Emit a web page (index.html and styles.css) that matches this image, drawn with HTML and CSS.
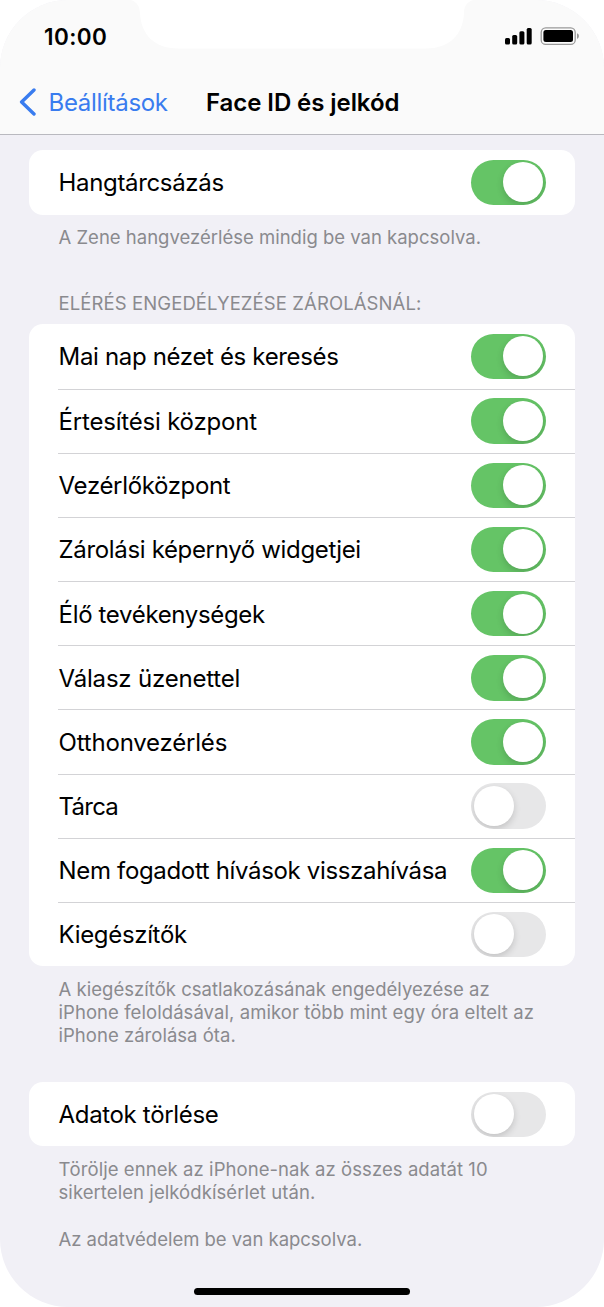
FILE: index.html
```html
<!DOCTYPE html>
<html lang="hu">
<head>
<meta charset="utf-8">
<title>Face ID és jelkód</title>
<link rel="stylesheet" href="styles.css">
</head>
<body>
<main class="phone">
  <header class="top">
    <svg class="notch" width="328" height="49" viewBox="0 0 328 49" aria-hidden="true"><path d="M-7 0C-1 2 1.500 6 2 13C3 34 16 48.500 40 48.500H288C311 48.500 325 35 326 13C326 6 329 2 335 0Z"/></svg>
    <div class="status">
      <span class="time">10:00</span>
      <svg class="status-icons" width="76" height="20" viewBox="0 0 76 20" aria-hidden="true">
        <rect x="1" y="11" width="5" height="6.500" rx="1.500"/>
        <rect x="8.200" y="8" width="5" height="9.500" rx="1.500"/>
        <rect x="15.400" y="4.200" width="5" height="13.300" rx="1.500"/>
        <rect x="22.700" y="1" width="5" height="16.500" rx="1.500"/>
        <rect class="battery-case" x="37.200" y="0.800" width="34" height="16.600" rx="4.500"/>
        <rect x="39.400" y="3.100" width="29.600" height="12" rx="2.500"/>
        <path class="battery-tip" d="M73 6.300Q75 7 75 9T73 11.900Z"/>
      </svg>
    </div>
    <nav class="nav">
      <svg class="chevron" width="18" height="30" viewBox="0 0 18 30" aria-hidden="true"><path d="M16 3L3.600 15L16 27"/></svg>
      <a class="back">Beállítások</a>
      <h1 class="title">Face ID és jelkód</h1>
    </nav>
  </header>

  <section class="card first">
    <div class="row"><span class="label">Hangtárcsázás</span><i class="toggle on"></i></div>
  </section>
  <p class="note">A Zene hangvezérlése mindig be van kapcsolva.</p>

  <h2 class="heading">ELÉRÉS ENGEDÉLYEZÉSE ZÁROLÁSNÁL:</h2>
  <section class="card">
    <div class="row"><span class="label">Mai nap nézet és keresés</span><i class="toggle on"></i></div>
    <div class="row"><span class="label wide">Értesítési központ</span><i class="toggle on"></i></div>
    <div class="row"><span class="label">Vezérlőközpont</span><i class="toggle on"></i></div>
    <div class="row"><span class="label">Zárolási képernyő widgetjei</span><i class="toggle on"></i></div>
    <div class="row"><span class="label">Élő tevékenységek</span><i class="toggle on"></i></div>
    <div class="row"><span class="label wide">Válasz üzenettel</span><i class="toggle on"></i></div>
    <div class="row"><span class="label wide">Otthonvezérlés</span><i class="toggle on"></i></div>
    <div class="row"><span class="label narrow">Tárca</span><i class="toggle"></i></div>
    <div class="row"><span class="label">Nem fogadott hívások visszahívása</span><i class="toggle on"></i></div>
    <div class="row"><span class="label">Kiegészítők</span><i class="toggle"></i></div>
  </section>
  <p class="note"><span class="slight">A kiegészítők csatlakozásának engedélyezése az</span><br><span class="loose">iPhone feloldásával, amikor több mint egy óra eltelt az</span><br><span class="slight">iPhone zárolása óta.</span></p>

  <section class="card last">
    <div class="row"><span class="label">Adatok törlése</span><i class="toggle"></i></div>
  </section>
  <p class="note"><span class="loose">Törölje ennek az iPhone-nak az összes adatát 10</span><br><span class="loose">sikertelen jelkódkísérlet után.</span></p>
  <p class="note extra">Az adatvédelem be van kapcsolva.</p>
  <div class="home"></div>
</main>
</body>
</html>
```
FILE: styles.css
```css
* { box-sizing: border-box; }
body { margin: 0; background: #fff; font-family: Inter, "Liberation Sans", sans-serif; color: #000; }
.phone { position: relative; display: flex; flex-direction: column; width: 604px; height: 1307px; overflow: hidden; background: #f1f0f6; border-radius: 68px; }
.top { position: relative; height: 135px; flex: none; background: #fafafa; border-bottom: 1px solid #b9b9bf; }
.notch { position: absolute; left: 138px; top: 0; fill: #fff; overflow: visible; }
.status { display: flex; justify-content: space-between; align-items: center; height: 72px; padding: 0 24px 0 44px; }
.time { font-size: 22.500px; font-weight: 600; letter-spacing: .4px; }
.status-icons { display: block; margin-top: 1px; }
.battery-case { fill: none; stroke: #999; stroke-width: 1.300; }
.battery-tip { fill: #999; }
.nav { display: flex; align-items: center; height: 60px; padding-left: 18px; }
.chevron { fill: none; stroke: #397cef; stroke-width: 3.400; stroke-linecap: round; stroke-linejoin: round; }
.back { margin-left: 12.500px; width: 157.500px; flex: none; font-size: 24px; letter-spacing: -0.300px; color: #397cef; white-space: nowrap; }
.title { margin: 0; font-size: 24px; font-weight: 600; letter-spacing: -0.070px; white-space: nowrap; }
.card { flex: none; margin: 0 29px 0 29.400px; padding-left: 28.600px; background: #fff; border-radius: 14px; }
.first { margin-top: 15.400px; }
.row { display: flex; align-items: center; justify-content: space-between; height: 64.180px; padding-right: 29px; }
.row + .row { border-top: 1px solid #d3d3d6; }
.label { padding: 1px 0 0 .6px; font-size: 24px; letter-spacing: -0.340px; white-space: nowrap; }
.wide { letter-spacing: -0.200px; }
.narrow { letter-spacing: -0.750px; }
.toggle { flex: none; display: flex; align-items: center; width: 75px; height: 45.500px; padding: 0 2.800px; border-radius: 23px; overflow: hidden; background: #e7e7e8; }
.toggle::before { content: ""; width: 40px; height: 40px; border-radius: 50%; background: #fff; box-shadow: 0 3px 7px rgba(0, 0, 0, .16); }
.on { justify-content: flex-end; background: #65c466; }
.note { flex: none; margin: 11.500px 58px 0 58.500px; font-size: 18.500px; line-height: 23.400px; color: #8a8a8e; white-space: nowrap; }
.slight { letter-spacing: .025px; }
.loose { letter-spacing: .070px; }
.heading { flex: none; margin: 41.600px 58px 9.300px 58.500px; font-size: 18.500px; font-weight: 400; line-height: 24px; letter-spacing: .1px; color: #8a8a8e; white-space: nowrap; }
.last { margin-top: 34.500px; }
.extra { margin-top: 23.300px; letter-spacing: -.02px; }
.home { position: absolute; left: 194px; top: 1288px; width: 216px; height: 7.300px; border-radius: 4px; background: #000; }
```
